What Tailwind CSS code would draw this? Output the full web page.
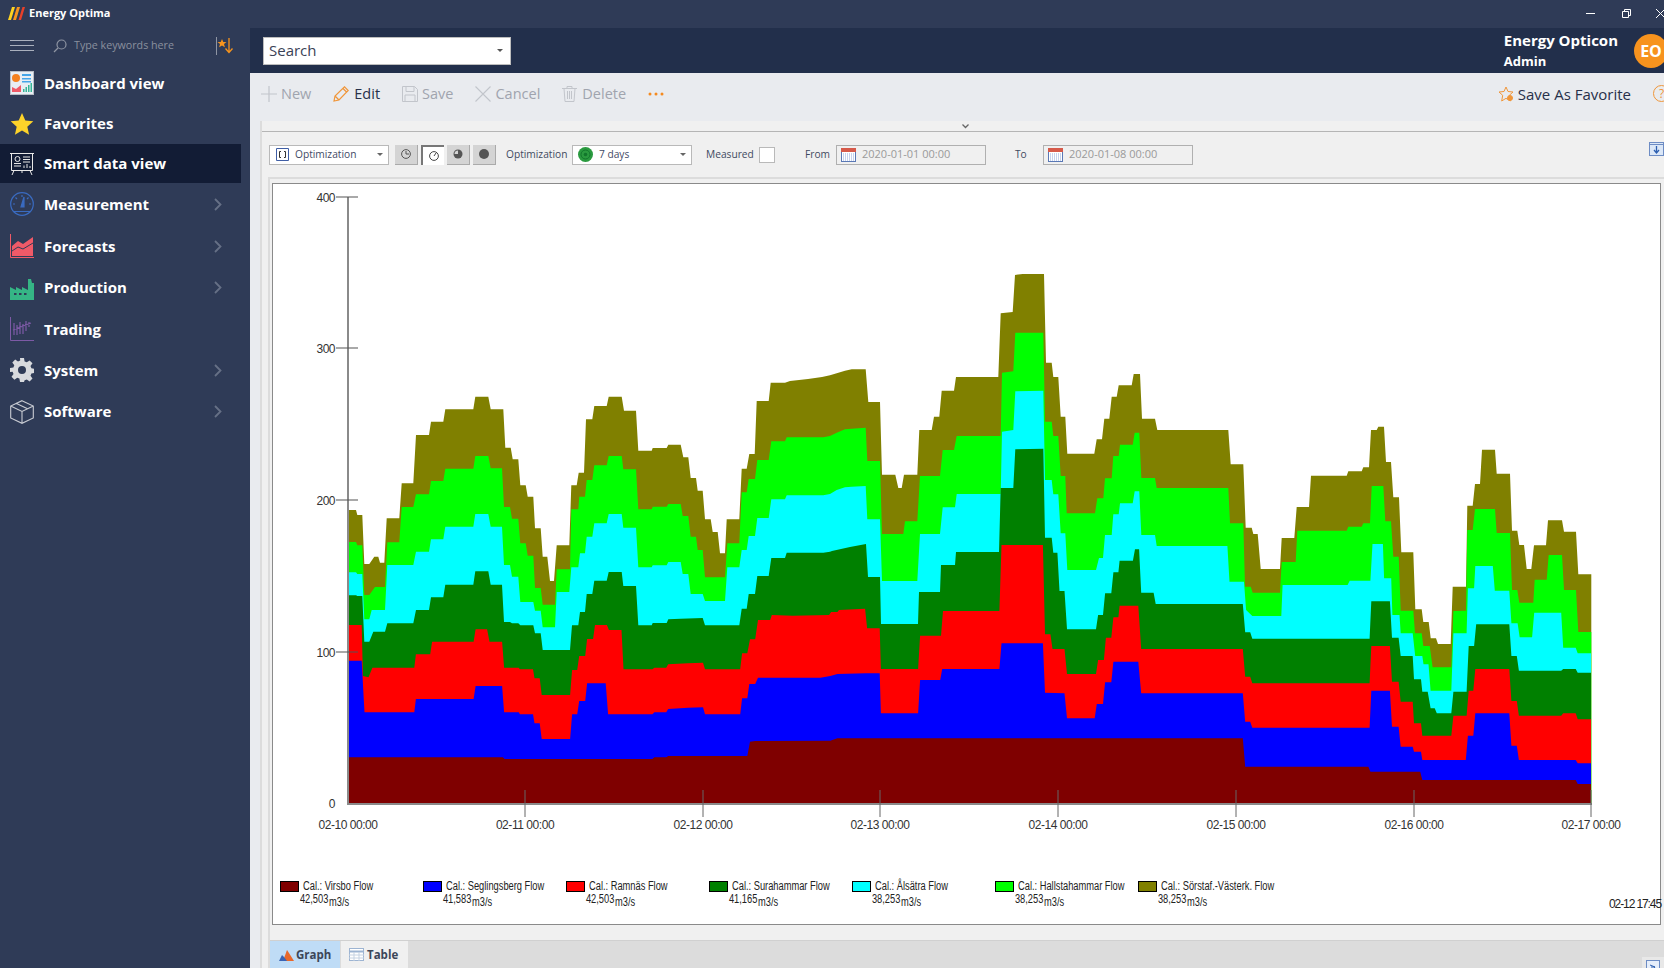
<!doctype html>
<html>
<head>
<meta charset="utf-8">
<script src="https://cdn.jsdelivr.net/npm/@tailwindcss/browser@4"></script>
</head>
<body class="m-0 overflow-hidden bg-[#e9ebef] font-['Open_Sans',sans-serif]">
<div class="w-[1664px] h-[968px] flex flex-col overflow-hidden">
  <!-- title bar -->
  <div class="h-7 shrink-0 bg-[#2f3b57] flex items-center relative text-white pb-[2px]">
    <svg class="ml-[8px] w-[17px] h-[13px]" viewBox="0 0 17 13"><path d="M0 13 4 0h3L3 13z" fill="#ffd21f"/><path d="M5 13 9 0h3L8 13z" fill="#f7941e"/><path d="M10.500 13l4-13H17l-4 13z" fill="#e8402a"/></svg>
    <span class="ml-[4px] text-[11px] font-bold">Energy Optima</span>
    <div class="ml-auto flex items-center">
      <svg class="w-[9px] h-[9px] mr-[27px]" viewBox="0 0 9 9"><path d="M0 4.500h9" stroke="#fff" stroke-width="1"/></svg>
      <svg class="w-[9px] h-[9px] mr-[25px]" viewBox="0 0 9 9" fill="none" stroke="#fff"><path d="M.5 2.500h6v6h-6zM2.500 2.500v-2h6v6h-2"/></svg>
      <svg class="w-[9px] h-[9px] -mr-[1px]" viewBox="0 0 9 9" stroke="#fff"><path d="M0 0l9 9M9 0 0 9"/></svg>
    </div>
  </div>
  <div class="flex flex-1 min-h-0">
    <!-- sidebar -->
    <aside class="w-[250px] shrink-0 bg-[#2f3b57] text-white">
      <div class="h-[35px] flex items-center pl-[10px]">
        <div class="w-6 flex flex-col gap-[4px]"><i class="block h-px bg-[#aab0bd]"></i><i class="block h-px bg-[#aab0bd]"></i><i class="block h-px bg-[#aab0bd]"></i></div>
        <svg class="ml-[19px] w-[14px] h-[14px]" viewBox="0 0 14 14" fill="none" stroke="#8f95a3" stroke-width="1.200"><circle cx="8.500" cy="5.500" r="4.500"/><path d="M5 9 1 13"/></svg>
        <span class="ml-[7px] text-[10.700px] whitespace-nowrap text-[#8a909e] leading-none">Type keywords here</span>
        <svg class="ml-auto mr-[16px] w-[18px] h-[18px]" viewBox="0 0 18 18"><path d="M.5 0v18" stroke="#8f95a3"/><path d="M6 2l1.300 3h3.200L8 7l.9 3.200L6 8.400 3.100 10.200 4 7 1.500 5h3.200z" fill="#f7941e"/><path d="M13 1v14M9.500 11.500 13 15.500l3.500-4" stroke="#f7941e" stroke-width="1.300" fill="none"/></svg>
      </div>
      <nav class="text-[15px] font-bold">
        <div class="w-[241px] h-[40px] flex items-center pl-[10px] pr-[19px]">
          <svg class="w-6 h-6 shrink-0" viewBox="0 0 24 24"><rect x=".5" y=".5" width="23" height="23" fill="#e8eef4" stroke="#b8bdc6"/><circle cx="6" cy="7" r="4" fill="#f5811f"/><path d="M12 3h9v2h-9zM12 7h9v1.500h-9zM12 10h9v1.500h-9z" fill="#45a5e8"/><path d="M2 21v-5l4 2 5-4v7z" fill="#ef5a68"/><path d="M13 21v-3h1.500v3zM15.500 21v-5H17v5zM18 21v-7h1.500v7zM20.500 21v-9H22v9z" fill="#35b596"/></svg>
          <span class="ml-[10px]">Dashboard view</span>
        </div>
        <div class="w-[241px] h-[41px] flex items-center pl-[10px] pr-[19px]">
          <svg class="w-6 h-6 shrink-0" viewBox="0 0 24 24"><path d="M12 1l3.300 7.500 8 .8-6 5.400 1.800 8L12 18.500l-7.100 4.200 1.800-8-6-5.400 8-.8z" fill="#fdd32a"/></svg>
          <span class="ml-[10px]">Favorites</span>
        </div>
        <div class="w-[241px] h-[39px] flex items-center pl-[10px] pr-[19px] bg-[#121c35]">
          <svg class="w-6 h-6 shrink-0" viewBox="0 0 24 24" fill="none" stroke="#e8e8e8"><path d="M0 1.500h24M1.500 1.500v17h21v-17M4 18.500 2 23M20 18.500l2 4.500M12 18.500V21"/><circle cx="7.500" cy="7" r="2.500"/><path d="M13 5h7M13 7.500h7M13 10h7M4 11.500h7M4 14h7M14 16v-2.500M17 16v-4M20 16v-2"/></svg>
          <span class="ml-[10px]">Smart data view</span>
        </div>
        <div class="w-[241px] h-[42px] flex items-center pl-[10px] pr-[19px]">
          <svg class="w-6 h-6 shrink-0" viewBox="0 0 24 24" fill="none" stroke="#3a6bc0" stroke-width="1.200"><circle cx="12" cy="12" r="11.300"/><path d="M3 12h2M19 12h2M12 3v2M5.500 5.500 7 7M18.500 5.500 17 7M4 19.500h16"/><path d="M11 15l3-10 0 10z" fill="#3a6bc0"/></svg>
          <span class="ml-[10px]">Measurement</span>
          <svg class="ml-auto w-2 h-[13px]" viewBox="0 0 8 13" fill="none" stroke="#667086" stroke-width="1.800"><path d="M1 1l5.500 5.500L1 12"/></svg>
        </div>
        <div class="w-[241px] h-[42px] flex items-center pl-[10px] pr-[19px]">
          <svg class="w-6 h-6 shrink-0" viewBox="0 0 24 24"><path d="M.5 0v23.500H24" stroke="#ef5a68" fill="none"/><path d="M2 22V12l6-5 5 3 10-7v19z" fill="#ef5a68"/><path d="M2 17l6-4 5 2 10-6" stroke="#2f3b57" fill="none"/></svg>
          <span class="ml-[10px]">Forecasts</span>
          <svg class="ml-auto w-2 h-[13px]" viewBox="0 0 8 13" fill="none" stroke="#667086" stroke-width="1.800"><path d="M1 1l5.500 5.500L1 12"/></svg>
        </div>
        <div class="w-[241px] h-[41px] flex items-center pl-[10px] pr-[19px]">
          <svg class="w-6 h-6 shrink-0" viewBox="0 0 24 24"><path d="M0 24V11l6 3V11l6 3V11l6 3V3h3l1 4h2v17z" fill="#35b585"/><path d="M4 17h2.500v2H4zM9 17h2.500v2H9zM14 17h2.500v2H14z" fill="#2f3b57"/></svg>
          <span class="ml-[10px]">Production</span>
          <svg class="ml-auto w-2 h-[13px]" viewBox="0 0 8 13" fill="none" stroke="#667086" stroke-width="1.800"><path d="M1 1l5.500 5.500L1 12"/></svg>
        </div>
        <div class="w-[241px] h-[42px] flex items-center pl-[10px] pr-[19px]">
          <svg class="w-6 h-6 shrink-0" viewBox="0 0 24 24" fill="none" stroke="#7d5aa6"><path d="M.5 0v23.500H24"/><path d="M4 6v12M7 8v10M10 5v12M13 7v10M16 4v10M19 5v5M3 13l18-7" stroke-width="1.200"/></svg>
          <span class="ml-[10px]">Trading</span>
        </div>
        <div class="w-[241px] h-[40px] flex items-center pl-[10px] pr-[19px]">
          <svg class="w-6 h-6 shrink-0" viewBox="0 0 24 24"><path fill-rule="evenodd" fill="#d8dade" d="M10 0h4l.6 3.400 2.200.9L19.600 2.400l2.900 2.900-2 2.800.9 2.200 3.400.6v4l-3.400.6-.9 2.200 2 2.800-2.900 2.900-2.800-2-2.200.9L14 24h-4l-.6-3.400-2.200-.9-2.800 2-2.900-2.900 2-2.800-.9-2.200L0 14v-4l3.400-.6.9-2.200-2-2.800 2.900-2.900 2.800 2 2.200-.9zM12 8a4 4 0 1 0 0 8 4 4 0 0 0 0-8z"/></svg>
          <span class="ml-[10px]">System</span>
          <svg class="ml-auto w-2 h-[13px]" viewBox="0 0 8 13" fill="none" stroke="#667086" stroke-width="1.800"><path d="M1 1l5.500 5.500L1 12"/></svg>
        </div>
        <div class="w-[241px] h-[43px] flex items-center pl-[10px] pr-[19px]">
          <svg class="w-6 h-6 shrink-0" viewBox="0 0 24 24" fill="none" stroke="#c9ccd3" stroke-width="1.100"><path d="M12 .7 23.300 6v12L12 23.300.7 18V6zM.7 6 12 11.500 23.300 6M12 11.500v11.800M6 3.300l11.500 5.400"/></svg>
          <span class="ml-[10px]">Software</span>
          <svg class="ml-auto w-2 h-[13px]" viewBox="0 0 8 13" fill="none" stroke="#667086" stroke-width="1.800"><path d="M1 1l5.500 5.500L1 12"/></svg>
        </div>
      </nav>
    </aside>
    <!-- main -->
    <main class="flex-1 min-w-0 flex flex-col">
      <header class="h-[45px] shrink-0 bg-[#222f4b] flex items-center text-white relative">
        <div class="ml-[13px] w-[248px] h-[28px] bg-white border border-[#bdbdbd] flex items-center pl-[5px] text-[15px] text-[#3a4256]">Search
          <svg class="ml-auto mr-[7px] w-[6px] h-[3px]" viewBox="0 0 6 3"><path d="M0 0h6L3 3z" fill="#555"/></svg>
        </div>
        <div class="ml-auto mr-[46px] leading-none">
          <div class="text-[15px] font-bold mb-[7px]">Energy Opticon</div>
          <div class="text-[13px] font-bold">Admin</div>
        </div>
        <div class="absolute left-[1384px] top-[6px] w-[34px] h-[34px] rounded-full bg-[#f7931e] flex items-center justify-center text-[16px] font-bold">EO</div>
      </header>
      <div class="h-[48px] shrink-0 bg-[#e9ebef] flex items-center pl-[11px] pb-[6px] gap-[22px] text-[14.500px] text-[#a0a4ae] relative">
        <div class="flex items-center gap-[4px]"><svg class="w-4 h-4" viewBox="0 0 16 16" stroke="#c2c5cb" stroke-width="1.200"><path d="M8 0v16M0 8h16"/></svg>New</div>
        <div class="flex items-center gap-[5px] text-[#27304a]"><svg class="w-4 h-4" viewBox="0 0 16 16" fill="none" stroke="#f0963a" stroke-width="1.200"><path d="M1 15l1-5L11.500.8l3.700 3.700L6 14zM2 10l4 4M10 2.500l3.500 3.500"/></svg>Edit</div>
        <div class="flex items-center gap-[4px]"><svg class="w-4 h-4" viewBox="0 0 16 16" fill="none" stroke="#c2c5cb"><path d="M.5.500h12l3 3v12H.5zM4 .5v5h8v-5M3 15.500V9h10v6.500"/></svg>Save</div>
        <div class="flex items-center gap-[4px]"><svg class="w-4 h-4" viewBox="0 0 16 16" stroke="#c2c5cb" stroke-width="1.100"><path d="M.5.500l15 15M15.500.5l-15 15"/></svg>Cancel</div>
        <div class="flex items-center gap-[5px]"><svg class="w-[15px] h-4" viewBox="0 0 15 16" fill="none" stroke="#c2c5cb"><path d="M0 2.500h15M5 2.500V.5h5v2M2 2.500l1 13h9l1-13M5.500 5v8M7.500 5v8M9.500 5v8"/></svg>Delete</div>
        <svg class="w-4 h-1" viewBox="0 0 16 4" fill="#f58a1f"><circle cx="2" cy="2" r="1.500"/><circle cx="8" cy="2" r="1.500"/><circle cx="14" cy="2" r="1.500"/></svg>
        <div class="ml-auto flex items-center gap-[4px] text-[15px] text-[#27304a] mr-[33px]"><svg class="w-4 h-4" viewBox="0 0 16 16" fill="none" stroke="#f0963a"><path d="M8 1l2 4.500 5 .5-3.700 3.300L12.300 15 8 12.300 3.700 15l1-5.700L1 6l5-.5z"/><circle cx="12" cy="12" r="2.500" fill="#f0963a"/></svg>Save As Favorite</div>
        <div class="absolute left-[1403px] top-[12px] w-[17px] h-[17px] rounded-full border border-[#f0963a] text-[#f0963a] text-[12px] flex items-center justify-center">?</div>
      </div>
      <div class="flex-1 min-h-0 flex bg-[#e9ebef]">
        <div class="w-[10px] shrink-0"></div>
        <div class="flex-1 min-w-0 flex flex-col bg-[#f0f0f0] border-l-2 border-[#dcdcdc]">
          <div class="h-[10px] shrink-0 flex justify-center relative">
            <svg class="absolute left-[700px] top-[3px] w-[7px] h-[5px]" viewBox="0 0 7 5" fill="none" stroke="#666" stroke-width="1.300"><path d="M.5.500 3.500 3.500 6.500.5"/></svg>
          </div>
          <div class="h-[46px] shrink-0 border-t border-[#b5b5b5] flex items-center pl-[7px] text-[10.200px] text-[#3f4a5f]">
            <div class="w-[120px] h-[20px] bg-white border border-[#b9b9b9] flex items-center pl-[6px] text-[#3f4a66]">
              <svg class="w-[13px] h-[13px] shrink-0" viewBox="0 0 13 13" fill="none" stroke="#3f5ea5"><path d="M.5.500h12v12H.5z"/><path d="M5 3.500H3.500v6H5M8 3.500h1.500v6H8" stroke="#333"/></svg>
              <span class="ml-[6px]">Optimization</span>
              <svg class="ml-auto mr-[5px] w-[6px] h-[3px]" viewBox="0 0 6 3"><path d="M0 0h6L3 3z" fill="#666"/></svg>
            </div>
            <div class="ml-[6px] flex gap-[3px]">
              <div class="w-[23px] h-[20px] bg-[#d4d4d4] border-r border-b border-[#aaa] flex items-center justify-center"><svg class="w-[10px] h-[10px]" viewBox="0 0 10 10" fill="none" stroke="#555"><circle cx="5" cy="5" r="4.400"/><path d="M5 2v3h3"/></svg></div>
              <div class="w-[23px] h-[20px] bg-white border-t-2 border-l-2 border-[#777] flex items-center justify-center"><svg class="w-[10px] h-[10px]" viewBox="0 0 10 10" fill="none" stroke="#444"><circle cx="5" cy="5" r="4.400"/><path d="M5 5l2-3"/></svg></div>
              <div class="w-[23px] h-[20px] bg-[#d4d4d4] border-r border-b border-[#aaa] flex items-center justify-center"><svg class="w-[10px] h-[10px]" viewBox="0 0 10 10"><circle cx="5" cy="5" r="4.500" fill="#555"/><path d="M5 5 1.500 5A3.500 3.500 0 0 1 5 1.500z" fill="#d4d4d4"/></svg></div>
              <div class="w-[23px] h-[20px] bg-[#d4d4d4] border-r border-b border-[#aaa] flex items-center justify-center"><span class="block w-[10px] h-[10px] rounded-full bg-[#555]"></span></div>
            </div>
            <span class="ml-[10px] w-[66px]">Optimization</span>
            <div class="w-[120px] h-[20px] bg-white border border-[#b9b9b9] flex items-center pl-[5px] text-[#3f4a66]">
              <svg class="w-[15px] h-[15px] shrink-0" viewBox="0 0 15 15"><circle cx="7.500" cy="7.500" r="7.500" fill="#2a9a3f"/><circle cx="7.500" cy="7.500" r="4.500" fill="none" stroke="#12762c"/><circle cx="7.500" cy="7.500" r="1.800" fill="#12762c"/></svg>
              <span class="ml-[6px]">7 days</span>
              <svg class="ml-auto mr-[5px] w-[6px] h-[3px]" viewBox="0 0 6 3"><path d="M0 0h6L3 3z" fill="#666"/></svg>
            </div>
            <span class="ml-[14px] w-[53px]">Measured</span>
            <div class="w-4 h-4 bg-white border border-[#b9b9b9]"></div>
            <span class="ml-[30px] w-[31px]">From</span>
            <div class="w-[150px] h-[20px] border border-[#b0b0b0] flex items-center pl-[4px] text-[11px] text-[#9a9a9a]">
              <svg class="w-[15px] h-[14px] shrink-0" viewBox="0 0 15 14"><rect x=".5" y=".5" width="14" height="13" fill="#fff" stroke="#5a78b5"/><rect width="15" height="4" fill="#d65a4a"/><path d="M2 6h11M2 8h11M2 10h11M2 12h11" stroke="#8ea6dc" stroke-dasharray="1 1"/></svg>
              <span class="ml-[6px]">2020-01-01 00:00</span>
            </div>
            <span class="ml-[29px] w-[28px]">To</span>
            <div class="w-[150px] h-[20px] border border-[#b0b0b0] flex items-center pl-[4px] text-[11px] text-[#9a9a9a]">
              <svg class="w-[15px] h-[14px] shrink-0" viewBox="0 0 15 14"><rect x=".5" y=".5" width="14" height="13" fill="#fff" stroke="#5a78b5"/><rect width="15" height="4" fill="#d65a4a"/><path d="M2 6h11M2 8h11M2 10h11M2 12h11" stroke="#8ea6dc" stroke-dasharray="1 1"/></svg>
              <span class="ml-[6px]">2020-01-08 00:00</span>
            </div>
            <svg class="ml-auto w-[15px] h-[14px] -mt-[16px] translate-y-[2px]" viewBox="0 0 15 14"><rect x=".5" y=".5" width="14" height="13" fill="#dbe7f7" stroke="#6d8cc4"/><path d="M.5 2.500h14" stroke="#6d8cc4"/><path d="M7.500 4v6M5 8l2.500 3L10 8" stroke="#2d5fb0" stroke-width="1.300" fill="none"/></svg>
          </div>
          <div class="flex-1 min-h-0 flex flex-col ml-[6px] border-l-2 border-t-2 border-[#dcdcdc]">
            <div class="pt-[4px] pl-[2px] pr-[3px] pb-[15px]">
              <div class="relative h-[742px] bg-white border border-[#8a8a8a] font-['Liberation_Sans',sans-serif] text-[#333]">
                <svg class="absolute inset-0 w-full h-full" viewBox="273 184 1387 740">
                  <polygon id="s7" class="fill-[#808000]" points=""/>
                  <polygon id="s6" class="fill-[#00ff00]" points=""/>
                  <polygon id="s5" class="fill-[#00ffff]" points=""/>
                  <polygon id="s4" class="fill-[#008000]" points=""/>
                  <polygon id="s3" class="fill-[#ff0000]" points=""/>
                  <polygon id="s2" class="fill-[#0000ff]" points=""/>
                  <polygon id="s1" class="fill-[#7f0000]" points=""/>
                  <path d="M348 197V804H1592" fill="none" stroke="#8a8a8a" stroke-width="2"/>
                  <path d="M336 197h22M336 348h22M336 500h22M336 652h22" stroke="#555" stroke-width="1.200"/>
                  <path d="M525 790v27M703 790v27M880 790v27M1058 790v27M1236 790v27M1414 790v27M1591 790v27" stroke="#666" stroke-width="1"/>
                  <g class="text-[12px] tracking-[-0.5px] fill-[#333]" text-anchor="end">
                    <text x="335" y="202">400</text><text x="335" y="353">300</text><text x="335" y="505">200</text><text x="335" y="657">100</text><text x="335" y="808">0</text>
                  </g>
                  <g class="text-[12px] tracking-[-0.45px] fill-[#333]" text-anchor="middle">
                    <text x="348" y="829">02-10 00:00</text><text x="525" y="829">02-11 00:00</text><text x="703" y="829">02-12 00:00</text><text x="880" y="829">02-13 00:00</text><text x="1058" y="829">02-14 00:00</text><text x="1236" y="829">02-15 00:00</text><text x="1414" y="829">02-16 00:00</text><text x="1591" y="829">02-17 00:00</text>
                  </g>
                </svg>
                <div class="absolute left-[7px] top-[696px] flex text-[12px] text-[#222] leading-[12px]">
                  <div class="w-[143px] flex"><span class="mt-[1px] w-[19px] h-[11px] border border-black bg-[#7f0000] shrink-0"></span><div class="ml-[4px] origin-left scale-x-[0.775] whitespace-nowrap"><div>Cal.: Virsbo Flow</div><div class="-ml-[4px] mt-[1px]">42,503<span class="relative top-[3px] ml-[1px]">m3/s</span></div></div></div>
                  <div class="w-[143px] flex"><span class="mt-[1px] w-[19px] h-[11px] border border-black bg-[#0000ff] shrink-0"></span><div class="ml-[4px] origin-left scale-x-[0.775] whitespace-nowrap"><div>Cal.: Seglingsberg Flow</div><div class="-ml-[4px] mt-[1px]">41,583<span class="relative top-[3px] ml-[1px]">m3/s</span></div></div></div>
                  <div class="w-[143px] flex"><span class="mt-[1px] w-[19px] h-[11px] border border-black bg-[#ff0000] shrink-0"></span><div class="ml-[4px] origin-left scale-x-[0.775] whitespace-nowrap"><div>Cal.: Ramnäs Flow</div><div class="-ml-[4px] mt-[1px]">42,503<span class="relative top-[3px] ml-[1px]">m3/s</span></div></div></div>
                  <div class="w-[143px] flex"><span class="mt-[1px] w-[19px] h-[11px] border border-black bg-[#008000] shrink-0"></span><div class="ml-[4px] origin-left scale-x-[0.775] whitespace-nowrap"><div>Cal.: Surahammar Flow</div><div class="-ml-[4px] mt-[1px]">41,165<span class="relative top-[3px] ml-[1px]">m3/s</span></div></div></div>
                  <div class="w-[143px] flex"><span class="mt-[1px] w-[19px] h-[11px] border border-black bg-[#00ffff] shrink-0"></span><div class="ml-[4px] origin-left scale-x-[0.775] whitespace-nowrap"><div>Cal.: Ålsätra Flow</div><div class="-ml-[4px] mt-[1px]">38,253<span class="relative top-[3px] ml-[1px]">m3/s</span></div></div></div>
                  <div class="w-[143px] flex"><span class="mt-[1px] w-[19px] h-[11px] border border-black bg-[#00ff00] shrink-0"></span><div class="ml-[4px] origin-left scale-x-[0.775] whitespace-nowrap"><div>Cal.: Hallstahammar Flow</div><div class="-ml-[4px] mt-[1px]">38,253<span class="relative top-[3px] ml-[1px]">m3/s</span></div></div></div>
                  <div class="w-[200px] flex"><span class="mt-[1px] w-[19px] h-[11px] border border-black bg-[#808000] shrink-0"></span><div class="ml-[4px] origin-left scale-x-[0.775] whitespace-nowrap"><div>Cal.: Sörstaf.-Västerk. Flow</div><div class="-ml-[4px] mt-[1px]">38,253<span class="relative top-[3px] ml-[1px]">m3/s</span></div></div></div>
                </div>
                <div class="absolute -right-px top-[714px] text-[12px] tracking-[-1.100px] text-[#222] leading-[12px]">02-12 17:45</div>
              </div>
            </div>
            <div class="flex-1 min-h-0 bg-[#dcdcdc] border-t border-[#d0d0d0] flex items-stretch relative text-[11.500px] font-bold text-[#3c4658]">
              <div class="w-[70px] bg-[#bfdcf6] flex items-center pl-[9px] gap-[2px]">
                <svg class="w-[15px] h-[13px]" viewBox="0 0 15 13"><path d="M4 13l4-11 2 3 5 8z" fill="#e8682b"/><path d="M0 13l3-6 2 2 3 4z" fill="#3a64b5"/></svg>Graph
              </div>
              <div class="ml-px w-[67px] bg-[#f0f0f0] flex items-center pl-[8px] gap-[3px]">
                <svg class="w-[15px] h-[13px]" viewBox="0 0 15 13"><rect x=".5" y=".5" width="14" height="12" fill="#fff" stroke="#9db4d2"/><path d="M0 3.500h15" stroke="#9db4d2" stroke-width="2"/><path d="M5 4v9M10 4v9M0 7h15M0 10h15" stroke="#c5d2e2"/></svg>Table
              </div>
              <div class="absolute right-0 bottom-0 w-[22px] h-[11px] bg-[#e8e8e8] flex items-start justify-center pt-[3px] overflow-hidden">
                <svg class="w-[14px] h-[14px] shrink-0" viewBox="0 0 14 14"><rect x=".5" y=".5" width="13" height="13" fill="#e6eefa" stroke="#6d8cc4"/><path d="M4 5l5 2-3 4M9 7H5" stroke="#2d5fb0" fill="none"/></svg>
              </div>
            </div>
          </div>
        </div>
      </div>
    </main>
  </div>
</div>
<script>
const Z8=[330,380,3],Z9=[830,250,3],Z10=[1200,400,3],Z11=[340,600,2.529],Z12=[960,540,2.412];
function seg(z,a){const o=[];for(let i=0;i<a.length;i+=2)o.push((z[0]+a[i]/z[2]).toFixed(1)+','+(z[1]+a[i+1]/3).toFixed(1));return o}
function real(a){const o=[];for(let i=0;i<a.length;i+=2)o.push(a[i]+','+a[i+1]);return o}
function set(id,parts){const first=parts[0].split(',')[0],last=parts[parts.length-1].split(',')[0];document.getElementById(id).setAttribute('points',first+',804 '+parts.join(' ')+' '+last+',804')}
set('s7',[...seg(Z8,[54,390,78,390,82,405,97,405,103,552,118,552,133,530,145,530,150,548,163,548,170,415,208,415,215,310,250,310,258,165,297,165,303,125,340,125,346,88,430,88,436,50,475,50,482,88,520,88,526,203,542,203,548,238,565,238,571,316,587,316,593,350,610,350,615,445,632,445,638,530,652,530,660,603,672,603,680,496,718,496,724,316,740,316,746,278,762,278,768,118,787,118,793,78,830,78,836,50,875,50,882,92,918,92,925,212,965,212,968,204,1010,204,1015,194,1052,194,1060,232,1075,232,1082,294,1098,294,1103,332,1118,332,1125,418,1142,418,1148,456,1163,456,1170,520,1185,520,1190,418,1228,418,1235,266,1250,266,1258,222,1274,222,1280,63,1316,63,1322,8,1365,8]),...real([790,381,808,379,822,377]),...seg(Z9,[0,376,20,370,45,362,65,358,107,358,115,456,150,456,156,674,196,674,205,714,215,714,222,674,262,674,268,540,305,540,312,500,328,500,335,422,372,422,378,381,505,381,512,190,548,186,555,75,578,72,642,72,648,338,665,338,670,381,685,381,692,500,706,500,712,611,793,611,800,568,816,568,823,506,838,506,845,440,860,440,866,406,905,406,911,372,930,372,936,506,975,506,982,540,1195,540]),...seg(Z10,[92,193,130,193,137,383,155,383,160,402,173,402,182,507,240,507,245,414,283,414,290,321,327,321,333,227,440,227,445,214,485,214,490,202,507,202,513,90,530,90,535,80,552,80,558,186,573,186,580,292,597,292,604,457,640,457,646,628,665,628,670,666,686,666,692,715,708,715,714,732,752,732,758,560,798,560,802,317,818,317,825,252,840,252,846,149,885,149,890,221,930,221,936,392,952,392,958,435,972,435,980,507,994,507,1002,436,1038,436,1044,361,1086,361,1092,395,1128,395,1135,523,1174,523])]);
set('s6',[...seg(Z8,[54,486,78,486,82,496,97,496,103,645,118,645,135,621,165,621,172,487,208,487,215,381,250,381,258,343,297,343,303,303,340,303,346,266,430,266,436,228,475,228,482,265,516,265,522,381,540,381,546,416,565,416,571,490,587,490,593,527,610,527,615,624,632,624,638,674,675,674,680,568,720,568,724,388,745,388,748,350,765,350,770,300,787,300,793,256,830,256,836,228,875,228,880,268,918,268,925,388,965,388,968,380,1010,380,1015,372,1052,372,1058,408,1075,408,1082,470,1098,470,1103,510,1118,510,1125,592,1185,592,1192,490,1228,490,1235,337,1250,337,1256,297,1275,297,1282,240,1316,240,1324,184,1365,184,1370,172,1480,172,1500,168]),...seg(Z9,[20,548,45,538,65,536,107,533,112,633,150,633,156,852,220,852,225,814,262,814,270,678,330,678,338,600,372,600,380,558,512,558,516,368,550,364,556,248,640,248,645,515,665,515,670,558,685,558,692,678,706,678,710,790,795,790,802,745,820,745,825,685,845,685,850,618,866,618,870,584,908,584,914,548,928,548,934,684,975,684,980,714,1195,714]),...seg(Z10,[90,370,130,370,135,560,152,560,158,578,240,578,245,486,287,486,292,392,440,392,445,380,485,380,490,370,510,370,515,258,550,258,556,364,573,364,580,470,596,470,602,632,640,632,645,700,665,700,670,738,686,738]),...seg(Z12,[1133,318,1140,382,1185,382,1190,213]),...seg(Z10,[798,632,802,390,818,390,825,327,885,327,890,399,930,399,936,570,952,570,958,608,1000,608,1004,539,1040,539,1046,465,1086,465,1092,570,1128,570,1135,696,1174,696])]);
set('s5',[...seg(Z8,[54,577,78,577,82,582,97,582,103,718,118,718,125,690,165,690,172,555,250,555,258,515,297,515,303,478,340,478,346,440,430,440,436,402,475,402,482,440,516,440,522,555,540,555,546,590,565,590,571,666,610,666,615,692,632,692,638,742,675,742,680,636,718,636,724,562,745,562,750,520,765,520,770,470,787,470,793,430,830,430,836,402,875,402,880,443,918,443,925,562,965,562,968,556,1010,556,1015,546,1052,546,1058,582,1075,582,1082,642,1118,642,1125,663,1185,663,1192,562,1228,562,1235,510,1250,510,1256,468,1275,468,1282,414,1316,414,1324,358,1365,358,1370,346,1480,346,1500,342]),...seg(Z9,[20,720,45,712,65,710,107,708,112,808,150,808,156,993,262,993,270,852,330,852,338,772,375,772,380,732,512,732,516,545,550,540,556,424,640,422,645,690,665,690,670,733,685,733,692,850,706,850,712,960]),...real([1096,570,1099,558,1103,558]),...seg(Z9,[825,855,845,855,850,793,866,793,870,760,908,760,914,724,928,724,934,855,975,855,980,888]),...seg(Z12,[645,18,650,125,685,125,690,210,705,228,775,228,778,135,935,135,940,122,990,122,995,12,1020,12,1023,115,1040,115,1043,225,1060,225,1063,280,1092,280,1098,348,1115,348,1118,373,1130,373,1135,452,1185,452,1190,280,1222,280,1225,145,1240,145,1243,78,1285,78,1290,152,1325,152,1330,250,1345,250,1350,292,1380,292,1385,218,1450,218,1455,323,1485,323,1490,340,1522,340])]);
set('s4',[...seg(Z8,[54,646,78,646,82,648,97,648,103,785,118,785,130,755,165,755,172,730,250,730,258,690,297,690,303,652,340,652,346,614,430,614,436,574,475,574,482,614,516,614,522,726,540,726,546,730,565,730,571,736,610,736,615,760,632,760,638,810,720,810,726,736,745,736,750,696,765,696,770,642,787,642,793,602,830,602,836,576,875,576,880,618,918,618,925,736,965,736,968,729,1010,729,1015,718,1052,716,1118,714,1125,736,1228,736,1235,686,1250,686,1256,642,1275,642,1282,588,1316,588,1324,534,1365,534,1370,518,1480,518,1500,515]),...real([832,551,850,547,866,544,868,577,880,577,881,624,918,624,919,592,940,592,941,565,955,565,956,552,999,552]),...seg(Z9,[512,714,550,714,556,598,640,596,645,863,665,863]),...seg(Z12,[225,38,235,38,240,153,252,153,258,268,328,268,333,225,345,225,350,160,365,160,370,97,382,97,385,62,417,62,422,28,432,28,437,158,467,158,472,192,682,192,688,277,700,277,705,296,988,296,992,184,1037,184,1042,293,1058,293,1063,348,1092,348,1095,418,1112,418,1115,455,1128,455,1135,505,1145,505,1150,520,1185,520,1190,455,1222,455,1227,318,1240,318,1245,253,1325,253,1330,348,1343,348,1348,392,1450,392,1455,387,1485,387,1490,398,1522,398])]);
set('s3',[...seg(Z11,[20,75,55,75,58,228,72,232,82,203,188,203,192,163,228,163,233,125,338,125,343,88,372,88,378,125,410,125,415,203,452,203,455,208,488,208,492,235,505,235,510,285,582,285,587,210,600,210,605,168,620,168,625,117,640,117,645,75,675,75,680,90,712,90,717,208,790,208,795,203,825,203,830,193,880,190,918,188,923,208,1012,208,1017,160,1030,160,1037,118,1050,118,1057,60,1088,60,1092,45,1145,47,1237,45,1242,36,1258,36,1262,30,1328,26,1333,85,1365,85,1368,207,1462,207,1467,107,1520,107,1525,33]),...seg(Z12,[0,213,95,213,100,15,200,15,205,283,218,283,223,327,252,327,258,402,328,402,333,360,347,360,352,293,365,293,370,232,382,232,385,197,430,197,437,327,682,327,688,410,700,410,705,430,988,430,992,318,1037,318,1042,425,1058,425,1063,485,1092,485,1095,550,1112,550,1115,587,1185,587,1190,527,1222,527,1227,452,1238,452,1243,387,1325,387,1330,483,1343,483,1348,527,1450,527,1455,520,1485,520,1490,538,1522,538])]);
set('s2',[...seg(Z11,[20,182,55,182,60,295,62,337,188,337,192,297,338,297,343,258,410,258,415,337,452,337,455,343,488,343,492,370,505,370,510,417,582,417,587,343,600,343,605,303,620,303,625,250,672,250,678,343,790,343,795,337,825,337,830,327,880,323,918,322,923,343,1012,343,1017,295,1030,295,1035,252,1050,252,1057,233,1215,233,1240,228,1258,222,1330,220,1365,220,1368,340,1462,340,1467,240,1518,240,1523,207]),...seg(Z12,[0,387,95,387,100,310,200,310,205,458,252,460,258,535,325,535,330,492,345,492,350,427,365,427,370,365,430,365,437,460,682,460,688,545,700,545,705,563,988,563,992,452,1037,452,1042,560,1058,560,1063,620,1092,620,1095,635,1112,635,1115,660,1220,660,1225,587,1238,587,1243,520,1325,520,1330,617,1343,617,1348,660,1485,660,1490,670,1522,670])]);
set('s1',[...seg(Z11,[20,472,412,472,416,477,790,477,795,472,825,472,830,468,1030,468,1037,425,1050,423,1240,422,1258,415]),...seg(Z12,[682,595,688,680,985,680,990,695,1110,695,1115,720,1485,720,1490,732,1522,732])]);
</script>
</body>
</html>
